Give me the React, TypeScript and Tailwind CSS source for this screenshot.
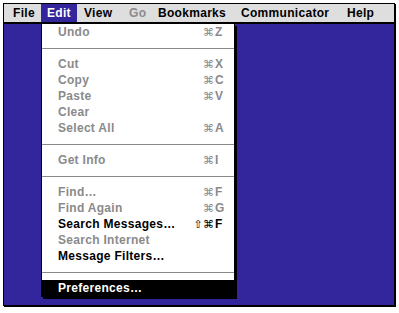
import React from 'react';

type Item =
  | { sep: true }
  | { label: string; key?: string; mod?: string; enabled?: boolean; active?: boolean };

const titles = [
  { name: 'File', w: 'w-[34px] pl-[6px]' },
  { name: 'Edit', w: 'w-[36px] pl-[6px]', open: true },
  { name: 'View', w: 'w-[45px] pl-[7px]' },
  { name: 'Go', w: 'w-[29px] pl-[7px]', disabled: true },
  { name: 'Bookmarks', w: 'w-[83px] pl-[7px]' },
  { name: 'Communicator', w: 'w-[106px] pl-[7px]' },
  { name: 'Help', w: 'w-[42px] pl-[7px]' },
];

const items: Item[] = [
  { label: 'Undo', key: 'Z' },
  { sep: true },
  { label: 'Cut', key: 'X' },
  { label: 'Copy', key: 'C' },
  { label: 'Paste', key: 'V' },
  { label: 'Clear' },
  { label: 'Select All', key: 'A' },
  { sep: true },
  { label: 'Get Info', key: 'I' },
  { sep: true },
  { label: 'Find…', key: 'F' },
  { label: 'Find Again', key: 'G' },
  { label: 'Search Messages…', key: 'F', mod: '⇧', enabled: true },
  { label: 'Search Internet' },
  { label: 'Message Filters…', enabled: true },
  { sep: true },
  { label: 'Preferences…', enabled: true, active: true },
];

const glyphFont = { fontFamily: '"DejaVu Sans", sans-serif' };

export default function App() {
  return (
    <div
      className="w-[399px] h-[313px] bg-white pt-[3px] pl-[3px] text-[12px] font-bold tracking-[0.3px]"
      style={{ fontFamily: '"Liberation Sans", "DejaVu Sans", sans-serif' }}
    >
      <div className="relative w-[392px] h-[303px] border border-black bg-[#33269c] shadow-[1px_1px_0_0_#000] flex flex-col">
        {/* menu bar */}
        <div className="h-[20px] bg-[#dedede] border-b-2 border-black flex items-stretch pl-[3px]">
          {titles.map((t) => (
            <div
              key={t.name}
              className={`${t.w} flex items-center leading-none pb-[1px] ${
                t.open ? 'bg-[#33269c] text-white' : t.disabled ? 'text-[#8a8a8a]' : 'text-black'
              }`}
            >
              {t.name}
            </div>
          ))}
        </div>

        {/* open Edit menu */}
        <div className="absolute left-[37px] top-[20px] w-[194px] bg-white border border-t-0 border-black shadow-[2px_2px_0_0_#000] flex flex-col">
          {items.map((it, i) => {
            if ('sep' in it) {
              return (
                <div key={i} className="h-[16px] pt-[8px]">
                  <div className="h-px bg-[#8a8a8a]" />
                </div>
              );
            }
            const color = it.active ? 'bg-black text-white' : it.enabled ? 'text-black' : 'text-[#8a8a8a]';
            return (
              <div key={i} className={`h-[16px] flex items-center leading-none ${color}`}>
                <span className="w-[150px] pl-[16px] whitespace-nowrap">{it.label}</span>
                <span className="w-[11px] text-right font-normal text-[11px]" style={glyphFont}>{it.mod}</span>
                {it.key && (
                  <span className="flex items-center gap-[2px]">
                    <span className="font-normal text-[11px] w-[10px] text-center" style={glyphFont}>⌘</span>
                    <span>{it.key}</span>
                  </span>
                )}
              </div>
            );
          })}
        </div>
      </div>
    </div>
  );
}
